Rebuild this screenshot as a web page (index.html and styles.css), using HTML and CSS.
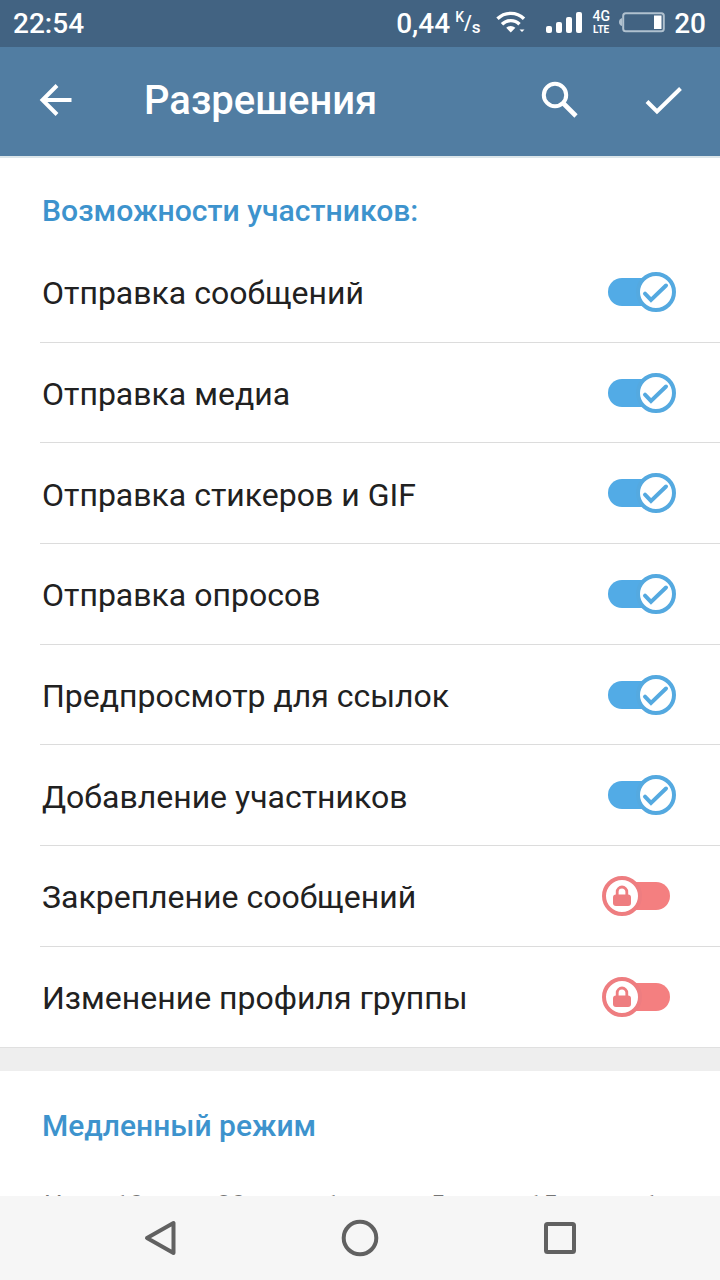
FILE: index.html
```html
<!DOCTYPE html>
<html lang="ru">
<head>
<meta charset="utf-8">
<title>Разрешения</title>
<link rel="stylesheet" href="styles.css">
</head>

<body>
<svg width="0" height="0" class="sprite">
  <symbol id="switch-on" viewBox="0 0 76 42">
    <rect x="6" y="7" width="60" height="28" rx="14" fill="#52abe6"/>
    <circle cx="54" cy="21" r="18" fill="#fff" stroke="#54a9e0" stroke-width="4"/>
    <path d="M43 22.7l6 6.3L64 14.5" fill="none" stroke="#54a9e0" stroke-width="4" stroke-linecap="round"/>
  </symbol>
  <symbol id="switch-off" viewBox="0 0 76 42">
    <rect x="16" y="7" width="52" height="28" rx="14" fill="#f47f80"/>
    <circle cx="20" cy="21" r="18" fill="#fff" stroke="#ee7d80" stroke-width="4"/>
    <rect x="11" y="19.5" width="18" height="11.5" rx="3" fill="#ee7d80"/>
    <path d="M15.2 20v-3.2a4.8 4.8 0 0 1 9.6 0V20" fill="none" stroke="#ee7d80" stroke-width="2.8"/>
  </symbol>
</svg>

<div class="screen">
  <div class="statusbar">
    <span class="clock">22:54</span>
    <span class="speed">0,44</span>
    <span class="unit"><sup>K</sup>/<sub>s</sub></span>
    <svg class="wifi" width="30" height="24" viewBox="0 0 30 24" fill="none" stroke="#fff" stroke-width="3.4">
      <path d="M1.5 8.8c7.3-7.3 19.2-7.3 26.5 0"/>
      <path d="M6 14.2c4.8-4.8 12.7-4.8 17.5 0"/>
      <path d="M10.2 17.8q4.6-3.6 9.2 0l-4.6 4.7z" fill="#fff" stroke="none"/>
      <path d="M23.5 19.5h5l-2.5 2.6z" fill="#fff" stroke="none"/>
    </svg>
    <svg class="signal" width="37" height="24" viewBox="0 0 37 24" fill="#fff">
      <rect x="0" y="16" width="6" height="7" rx="2"/>
      <rect x="10" y="12" width="6" height="11" rx="2"/>
      <rect x="20" y="7" width="6" height="16" rx="2"/>
      <rect x="30" y="2" width="6" height="21" rx="2"/>
    </svg>
    <span class="net"><b>4G</b><b>LTE</b></span>
    <svg class="battery" width="48" height="22" viewBox="0 0 48 22">
      <path d="M4 7v8Q1 14 1 11t3-4z" fill="#b0c1cf"/>
      <rect x="5.2" y="2.2" width="40.6" height="18" rx="2.5" fill="none" stroke="#b0c1cf" stroke-width="2"/>
      <rect x="36" y="4.5" width="7.5" height="13.5" fill="#fff"/>
    </svg>
    <span class="percent">20</span>
  </div>

  <div class="toolbar">
    <svg class="back" width="36" height="36" viewBox="0 0 36 36" fill="none" stroke="#fff" stroke-width="4">
      <path d="M33.5 18H4M19 3.5L4.5 18 19 32.5"/>
    </svg>
    <h1>Разрешения</h1>
    <svg class="search" width="38" height="38" viewBox="0 0 38 38" fill="none" stroke="#fff" stroke-width="4">
      <circle cx="14" cy="14" r="11.2"/>
      <path d="M22.5 22.5L35 35" stroke-width="4.6"/>
    </svg>
    <svg class="done" width="38" height="30" viewBox="0 0 38 30" fill="none" stroke="#fff" stroke-width="4">
      <path d="M2 15.5l10 10L35.5 2.5"/>
    </svg>
  </div>

  <div class="content">
    <h2>Возможности участников:</h2>
    <ul class="rights">
      <li>Отправка сообщений<svg class="switch"><use href="#switch-on"/></svg></li>
      <li>Отправка медиа<svg class="switch"><use href="#switch-on"/></svg></li>
      <li>Отправка стикеров и GIF<svg class="switch"><use href="#switch-on"/></svg></li>
      <li>Отправка опросов<svg class="switch"><use href="#switch-on"/></svg></li>
      <li>Предпросмотр для ссылок<svg class="switch"><use href="#switch-on"/></svg></li>
      <li>Добавление участников<svg class="switch"><use href="#switch-on"/></svg></li>
      <li>Закрепление сообщений<svg class="switch"><use href="#switch-off"/></svg></li>
      <li>Изменение профиля группы<svg class="switch"><use href="#switch-off"/></svg></li>
    </ul>
    <div class="divider"></div>
    <h2 class="slow-title">Медленный режим</h2>
    <div class="slow">
      <span>Нет</span><span>10 сек</span><span>30 сек</span><span>1 мин</span><span>5 мин</span><span>15 мин</span><span>1 ч</span>
    </div>
  </div>

  <div class="navbar">
    <svg width="40" height="40" viewBox="0 0 40 40"><path d="M7 20L33.5 5v30z"/></svg>
    <svg width="40" height="40" viewBox="0 0 40 40"><circle cx="20" cy="20" r="16.3"/></svg>
    <svg width="40" height="40" viewBox="0 0 40 40"><rect x="6" y="6" width="28" height="28" rx="1.5"/></svg>
  </div>
</div>
</body>
</html>
```
FILE: styles.css
```css
* {
  box-sizing: border-box;
}

body {
  margin: 0;
  font-family: Roboto, "Liberation Sans", sans-serif;
  background: #fff;
}

h1, h2, ul {
  margin: 0;
  padding: 0;
}

svg {
  display: block;
  flex: none;
}

.sprite {
  position: absolute;
}

.screen {
  display: flex;
  flex-direction: column;
  width: 720px;
  height: 1280px;
  overflow: hidden;
}

/* status bar */
.statusbar {
  display: flex;
  align-items: center;
  flex: none;
  height: 47px;
  padding: 0 14px 1px 13px;
  background: #426382;
  color: #fff;
  font-size: 28px;
  font-weight: 500;
}

.clock {
  flex: 1;
}

.unit {
  display: flex;
  align-items: center;
  width: 25px;
  margin-left: 5px;
  margin-right: 2px;
  font-size: 20px;
  line-height: 24px;
}

.unit sup, .unit sub {
  font-size: 14px;
  line-height: 14px;
}

.unit sup {
  align-self: flex-start;
  margin-top: -1px;
}

.unit sub {
  align-self: flex-end;
  margin-bottom: 1px;
  font-size: 17px;
}

.wifi {
  margin-left: 14px;
  margin-top: -2px;
}

.signal {
  margin-left: 20px;
  margin-top: -3px;
}

.net {
  display: flex;
  flex-direction: column;
  align-items: center;
  width: 18px;
  margin-left: 9px;
  font-size: 14px;
  line-height: 13px;
}

.net b {
  font-weight: 500;
}

.net b + b {
  font-size: 10px;
  font-weight: 700;
}

.battery {
  margin: -2px 8px 0 8px;
}

/* toolbar */
.toolbar {
  display: flex;
  align-items: center;
  flex: none;
  height: 109px;
  padding: 0 37px 2px 38px;
  background: #517da2;
  color: #fff;
}

.toolbar svg {
  margin-top: -2px;
}

.toolbar h1 {
  flex: 1;
  margin-left: 70px;
  font-size: 40px;
  font-weight: 500;
}

.toolbar .done {
  margin-top: 0;
  margin-left: 66px;
}

/* list */
.content {
  flex: 1;
  min-height: 0;
  overflow: hidden;
  border-top: 2px solid #dce6ea;
}

h2 {
  height: 84px;
  padding: 33px 42px 0;
  color: #3d93cd;
  font-size: 30.15px;
  font-weight: 500;
  line-height: 40px;
}

.rights {
  list-style: none;
}

.rights li {
  display: flex;
  align-items: center;
  justify-content: space-between;
  height: 100.7px;
  margin-left: 40px;
  padding: 3px 42px 0 2px;
  border-bottom: 1px solid #dcdcdc;
  color: #212121;
  font-size: 32px;
}

.rights li:last-child {
  height: 99.8px;
  border-bottom: 0;
}

.switch {
  width: 76px;
  height: 42px;
  margin-top: -3px;
}

.divider {
  height: 24px;
  background: #eee;
  border-top: 1px solid #e0e0e0;
}

.slow-title {
  height: 118px;
  padding-top: 35px;
  font-size: 30px;
}

.slow {
  display: grid;
  grid-template-columns: 60px 98px 106px repeat(3, 105px) 56px;
  padding: 0 41px 0 44px;
  color: #757575;
  font-size: 26px;
  line-height: 32px;
  text-align: center;
  white-space: nowrap;
}

.slow span:first-child {
  text-align: left;
}

.slow span:last-child {
  text-align: right;
}

/* system buttons */
.navbar {
  display: flex;
  justify-content: center;
  gap: 160px;
  flex: none;
  height: 84px;
  padding-top: 22px;
  background: #f6f6f6;
}

.navbar svg {
  fill: none;
  stroke: #616161;
  stroke-width: 4;
  stroke-linejoin: round;
}
```
